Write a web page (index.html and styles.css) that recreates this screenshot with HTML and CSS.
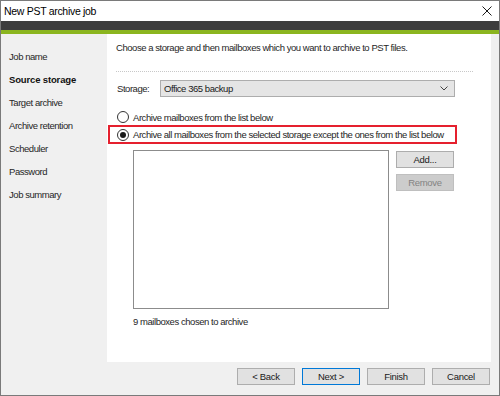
FILE: index.html
```html
<!DOCTYPE html>
<html>
<head>
<meta charset="utf-8">
<link rel="stylesheet" href="styles.css">
</head>
<body>
<div class="window">
  <div class="titlebar">
    <span class="title">New PST archive job</span>
    <svg class="close" width="10" height="10" viewBox="0 0 10 10"><path d="M0.5 0.5 L9.5 9.5 M9.5 0.5 L0.5 9.5" stroke="#1a1a1a" stroke-width="1"/></svg>
  </div>
  <div class="darkbar"></div>
  <div class="greenbar"></div>
  <div class="body">
    <nav class="sidebar">
      <div class="step">Job name</div>
      <div class="step active">Source storage</div>
      <div class="step">Target archive</div>
      <div class="step">Archive retention</div>
      <div class="step">Scheduler</div>
      <div class="step">Password</div>
      <div class="step">Job summary</div>
    </nav>
    <div class="main">
      <div class="panel">
        <p class="intro">Choose a storage and then mailboxes which you want to archive to PST files.</p>
        <div class="sep"></div>
        <div class="storage-row">
          <span class="label">Storage:</span>
          <div class="combo">
            <span>Office 365 backup</span>
            <svg class="chev" width="8" height="5" viewBox="0 0 8 5"><path d="M0.5 0.5 L4 4 L7.5 0.5" fill="none" stroke="#444" stroke-width="1"/></svg>
          </div>
        </div>
        <div class="radio-row first">
          <span class="radio"></span>
          <span>Archive mailboxes from the list below</span>
        </div>
        <div class="highlight">
          <div class="radio-row">
            <span class="radio checked"></span>
            <span>Archive all mailboxes from the selected storage except the ones from the list below</span>
          </div>
        </div>
        <div class="list-row">
          <div class="listbox"></div>
          <div class="side-buttons">
            <button class="btn">Add...</button>
            <button class="btn disabled">Remove</button>
          </div>
        </div>
        <p class="count">9 mailboxes chosen to archive</p>
      </div>
      <div class="footer">
        <button class="btn nav">&lt; Back</button>
        <button class="btn nav default">Next &gt;</button>
        <button class="btn nav">Finish</button>
        <button class="btn nav">Cancel</button>
      </div>
    </div>
  </div>
</div>
</body>
</html>
```

FILE: styles.css
```css
* { box-sizing: border-box; }
html, body { margin: 0; padding: 0; }
body {
  width: 500px;
  height: 396px;
  font-family: "Liberation Sans", Arial, sans-serif;
  font-size: 9.5px;
  letter-spacing: -0.45px;
  color: #262626;
  background: #fff;
  overflow: hidden;
  white-space: nowrap;
}
.window {
  width: 500px;
  height: 396px;
  border: 1px solid #7a7a7a;
  display: flex;
  flex-direction: column;
  background: #f0f0f0;
}
.titlebar {
  height: 20px;
  background: #fff;
  display: flex;
  align-items: center;
  justify-content: space-between;
  padding: 0 7px 0 3px;
}
.title {
  font-size: 10.5px;
  letter-spacing: -0.3px;
  color: #000;
}
.close { display: block; }
.darkbar { height: 9px; background: #3d3d3d; }
.greenbar { height: 4px; background: #8bb51f; }
.body {
  flex: 1;
  display: flex;
}
.sidebar {
  width: 106px;
  padding-top: 11px;
  padding-left: 8px;
}
.step {
  height: 23px;
  line-height: 23px;
  color: #262626;
}
.step.active { font-weight: bold; color: #111; letter-spacing: -0.15px; }
.main {
  flex: 1;
  display: flex;
  flex-direction: column;
}
.panel {
  flex: 1;
  background: #fff;
  margin-right: 8px;
  padding: 8px 0 0 9px;
}
.intro {
  margin: 0;
  line-height: 12px;
}
.sep {
  margin: 17px 18px 0 0;
  border-top: 1px dotted #c8c8c8;
}
.storage-row {
  display: flex;
  align-items: center;
  margin-top: 8px;
  height: 17px;
}
.label {
  width: 44px;
  padding-left: 1px;
}
.combo {
  width: 295px;
  height: 17px;
  background: #e5e5e5;
  border: 1px solid #adadad;
  display: flex;
  align-items: center;
  justify-content: space-between;
  padding: 0 6px 0 3px;
  color: #1a1a1a;
}
.chev { display: block; }
.radio-row {
  display: flex;
  align-items: center;
  height: 15px;
  gap: 4px;
}
.radio-row.first {
  margin-top: 12px;
  height: 16px;
  padding-left: 1px;
}
.radio {
  width: 12px;
  height: 12px;
  border-radius: 50%;
  border: 1px solid #333;
  background: #fff;
  display: flex;
  align-items: center;
  justify-content: center;
  flex: none;
}
.radio.checked::after {
  content: "";
  width: 6px;
  height: 6px;
  border-radius: 50%;
  background: #1a1a1a;
}
.highlight {
  margin-left: -8px;
  width: 349px;
  height: 19px;
  border: 2px solid #e5202e;
  padding-left: 7px;
}
.list-row {
  display: flex;
  margin-top: 6px;
  margin-left: 17px;
  gap: 7px;
}
.listbox {
  width: 256px;
  height: 159px;
  border: 1px solid #8c8c8c;
  background: #fff;
}
.side-buttons {
  display: flex;
  flex-direction: column;
  gap: 6px;
  padding-top: 1px;
}
.btn {
  font-family: inherit;
  font-size: 9.5px;
  letter-spacing: -0.3px;
  color: #1a1a1a;
  width: 58px;
  height: 17px;
  background: #e1e1e1;
  border: 1px solid #adadad;
  padding: 0;
  margin: 0;
}
.btn.disabled {
  background: #cccccc;
  border-color: #bfbfbf;
  color: #838383;
}
.count {
  margin: 7px 0 0 17px;
  line-height: 12px;
}
.footer {
  height: 33px;
  display: flex;
  justify-content: flex-end;
  gap: 7px;
  padding: 6px 9px 0 0;
}
.btn.default { border-color: #0078d7; }
```
